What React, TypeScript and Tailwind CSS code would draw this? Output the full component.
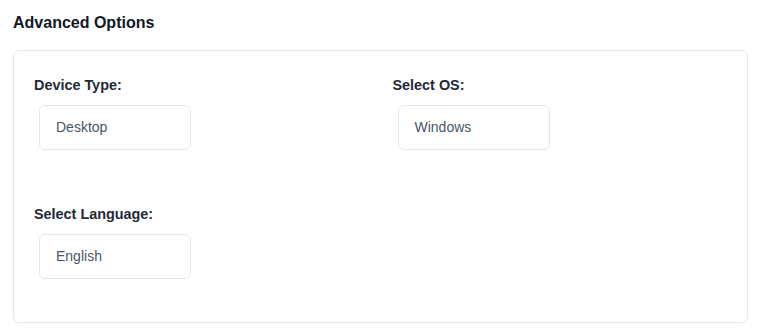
import React from 'react';

type Field = { label: string; value: string };

const fields: Field[] = [
  { label: 'Device Type:', value: 'Desktop' },
  { label: 'Select OS:', value: 'Windows' },
  { label: 'Select Language:', value: 'English' },
];

function OptionField({ label, value }: Field) {
  return (
    <div className="flex flex-col">
      <label className="text-[14.4px] leading-5 font-bold text-[#1f2937]">{label}</label>
      <div className="mt-2.5 ml-[5px] flex h-[45px] w-[152px] items-center rounded-md border border-[#e5e7eb] bg-white px-4 text-[14px] text-[#4a5568]">
        {value}
      </div>
    </div>
  );
}

export default function App() {
  return (
    <div
      className="min-h-screen bg-white p-[13px] pt-[11px]"
      style={{ fontFamily: '"Liberation Sans", Arial, sans-serif' }}
    >
      <h3 className="text-[16px] leading-6 font-bold text-[#111827]">Advanced Options</h3>
      <div className="mt-[15px] w-[735px] rounded-md border border-[#e2e8f0] bg-white px-5 pt-6 pb-[43px]">
        <div className="grid grid-cols-2 gap-x-6 gap-y-[54px]">
          {fields.map((f) => (
            <OptionField key={f.label} {...f} />
          ))}
        </div>
      </div>
    </div>
  );
}
